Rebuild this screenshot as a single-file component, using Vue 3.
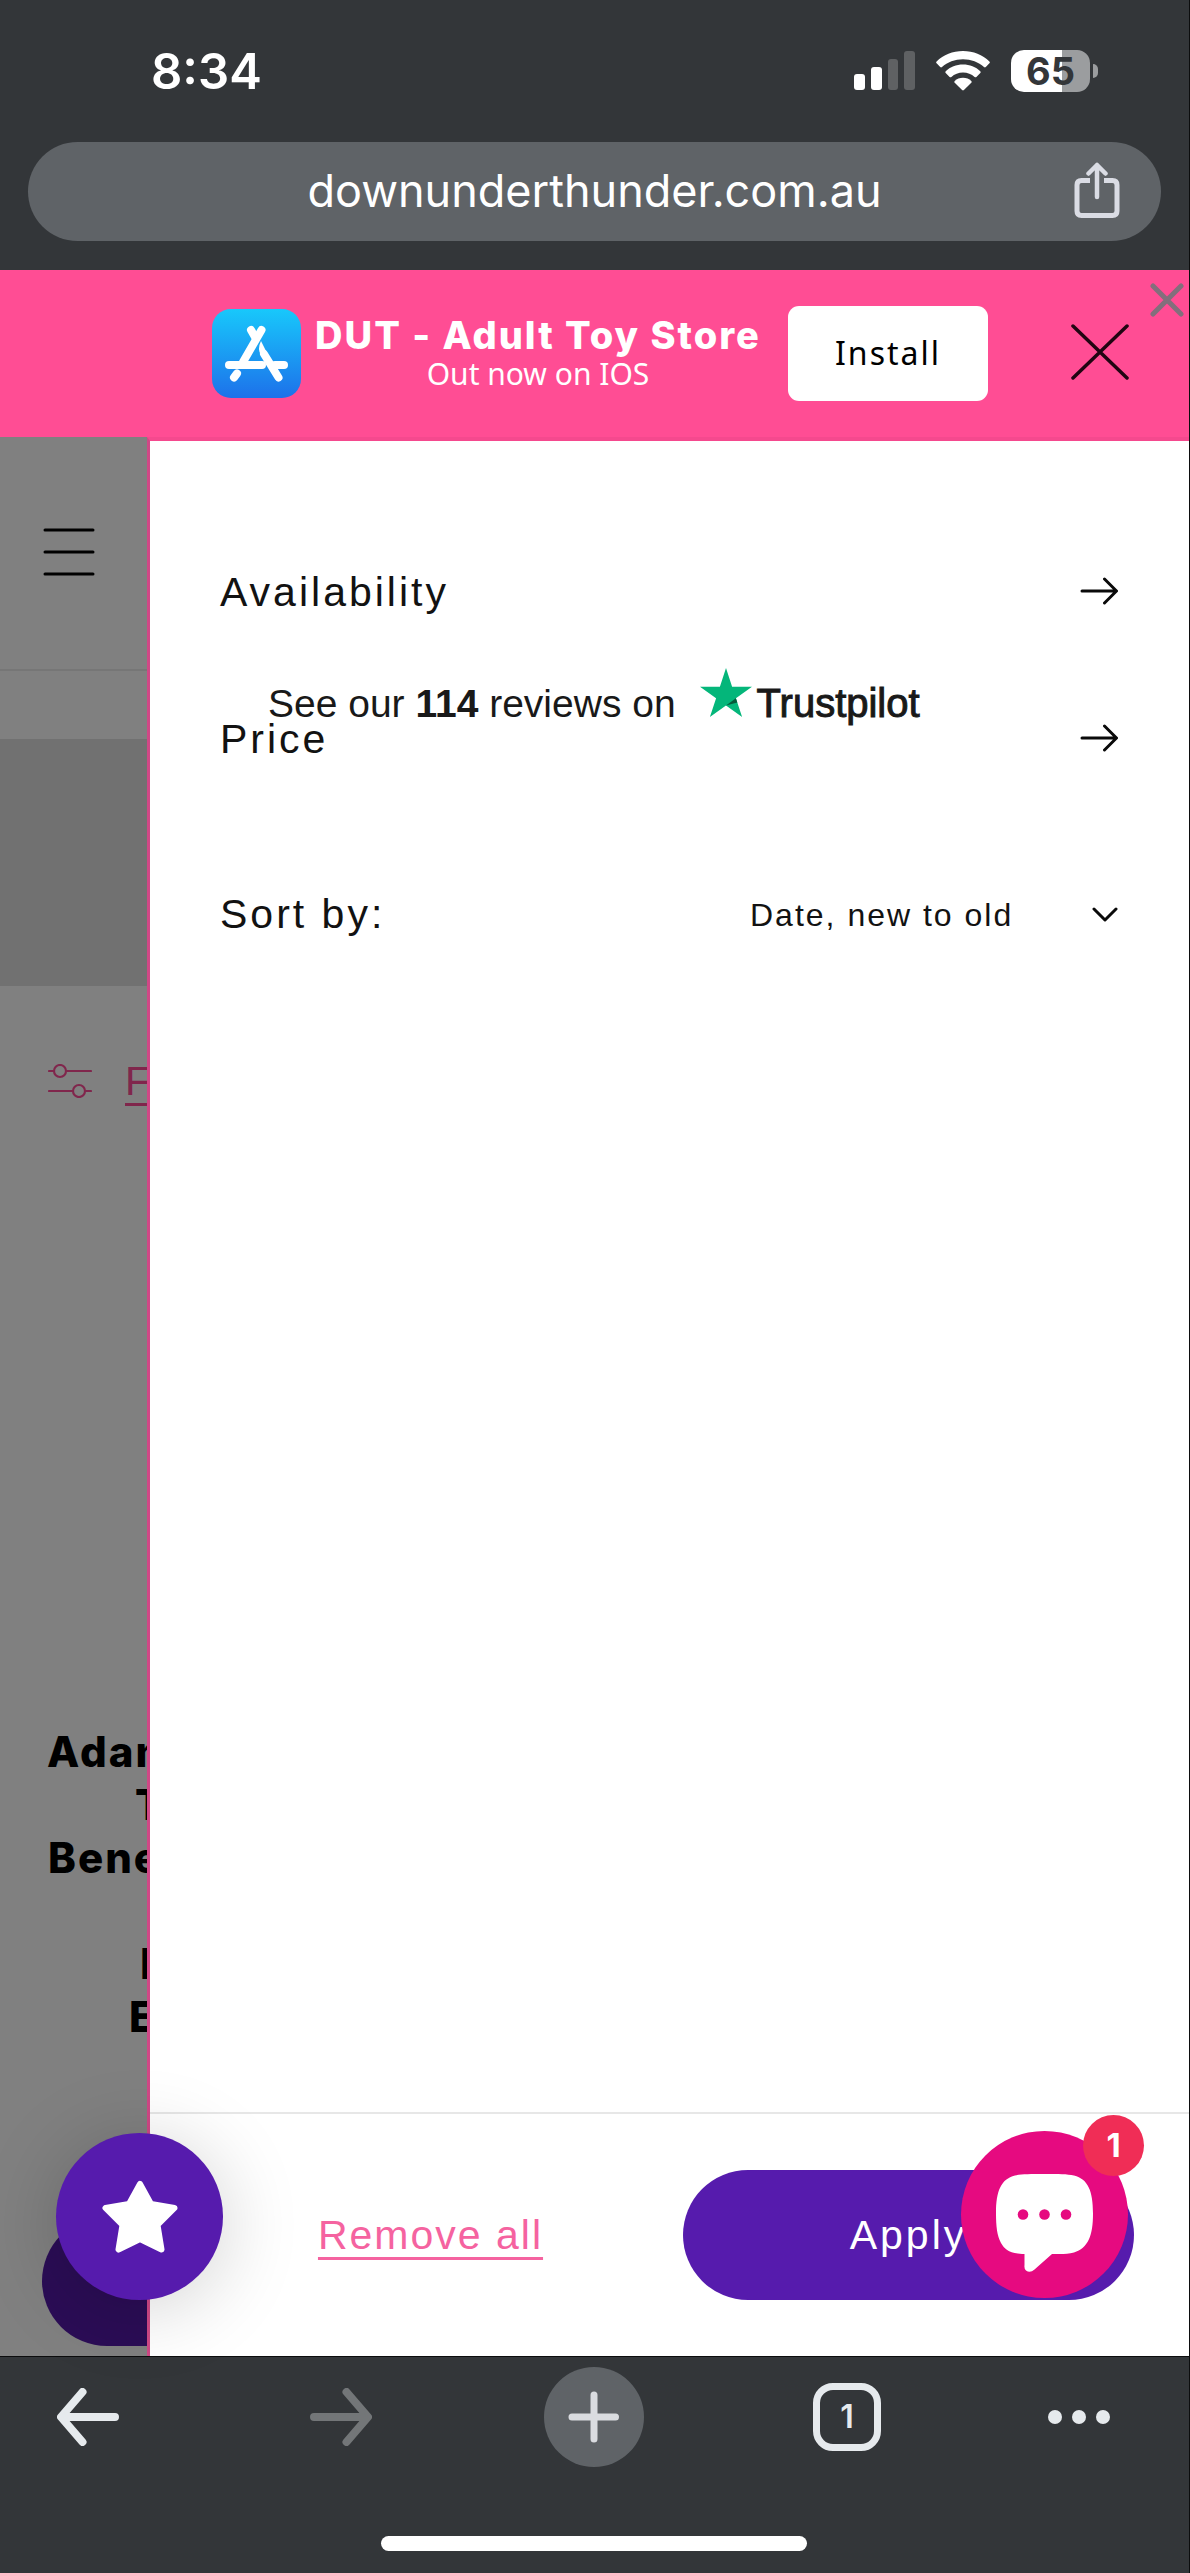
<script setup>
import { ref } from 'vue'

const sort = ref('newest')
const filters = ['Availability', 'Price']
const productTitle = [
  { text: 'Adam', indent: 47 },
  { text: 'T', indent: 135 },
  { text: 'Bene', indent: 48 },
  { text: '', indent: 0 },
  { text: 'I', indent: 140 },
  { text: 'E', indent: 129 }
]
</script>

<template>
  <div class="screen">
    <header class="browser-top">
      <div class="status">
        <span class="time">8:34</span>
        <div class="indicators">
          <svg width="61" height="40" viewBox="0 0 61 40" aria-hidden="true">
            <rect x="0" y="23" width="11" height="16" rx="3" fill="#fff" />
            <rect x="17" y="16" width="11" height="23" rx="3" fill="#fff" />
            <rect x="34" y="8" width="10" height="31" rx="3" fill="#5f6163" />
            <rect x="50" y="0" width="11" height="39" rx="3" fill="#5f6163" />
          </svg>
          <svg width="54" height="40" viewBox="0 0 54 40" fill="#fff" aria-hidden="true">
            <path d="M27 0C16.600 0 7.500 4 .6 10.400Q-.3 11.400 .6 12.300L4.200 16Q5.100 16.800 6 16C11.500 11 18.900 8.200 27 8.200S42.500 11 48 16Q48.900 16.800 49.800 16L53.400 12.300Q54.300 11.400 53.400 10.400C46.500 4 37.400 0 27 0Z" />
            <path d="M27 13.600C20.300 13.600 14.200 16.100 9.700 20.200Q8.800 21.100 9.700 22L13.600 25.900Q14.400 26.700 15.400 25.900C18.500 23.200 22.500 21.600 27 21.600S35.500 23.200 38.600 25.900Q39.600 26.700 40.400 25.900L44.300 22Q45.200 21.100 44.300 20.200C39.800 16.100 33.700 13.600 27 13.600Z" />
            <path d="M27 26.800C23.700 26.800 20.800 28 18.700 29.900Q17.800 30.800 18.700 31.700L26.100 39.100Q27 39.900 27.900 39.100L35.300 31.700Q36.200 30.800 35.300 29.900C33.200 28 30.300 26.800 27 26.800Z" />
          </svg>
          <div class="battery">
            <span class="cell">65</span>
            <span class="nub"></span>
          </div>
        </div>
      </div>
      <div class="address">
        <span class="url">downunderthunder.com.au</span>
        <button class="plain share" aria-label="Share">
          <svg width="46" height="56" viewBox="0 0 46 56" fill="none" stroke="#dadce4" stroke-width="5" stroke-linecap="round" stroke-linejoin="round">
            <path d="M16 18.500H7.500Q3 18.500 3 23V49Q3 53.500 7.500 53.500H38.500Q43 53.500 43 49V23Q43 18.500 38.500 18.500H30" stroke-linecap="butt" />
            <path d="M23 35V3M14.500 11.500L23 3L31.500 11.500" stroke-width="4.500" />
          </svg>
        </button>
      </div>
    </header>

    <aside class="banner">
      <svg class="app-icon" viewBox="0 0 89 89" aria-hidden="true">
        <defs>
          <linearGradient id="sky" x1="0" y1="0" x2="0" y2="1">
            <stop offset="0" stop-color="#18c8fb" />
            <stop offset="1" stop-color="#1d71ea" />
          </linearGradient>
        </defs>
        <rect width="89" height="89" rx="19" fill="url(#sky)" />
        <g stroke="#fff" stroke-width="8" stroke-linecap="round" fill="none">
          <path d="M49.500 21L31 53" />
          <path d="M39 21L43 28" />
          <path d="M17 56H50" />
          <path d="M63 56H72" />
          <path d="M25 64.500L22 68.500" />
          <path d="M52 45L66.500 68.500" />
        </g>
        <path d="M49 32Q45 40 49 46L55 56L58 50Z" fill="#fff" />
      </svg>
      <div class="pitch">
        <strong>DUT - Adult Toy Store</strong>
        <span>Out now on IOS</span>
      </div>
      <button class="install">Install</button>
      <button class="plain dismiss" aria-label="Dismiss banner">
        <svg width="58" height="56" viewBox="0 0 58 56" stroke="#210512" stroke-width="3.500" stroke-linecap="round">
          <path d="M2 2L56 54M56 2L2 54" />
        </svg>
      </button>
      <button class="plain corner-close" aria-label="Close">
        <svg width="34" height="34" viewBox="0 0 34 34" stroke="#826f7c" stroke-width="5" stroke-linecap="round">
          <path d="M3 3L31 31M31 3L3 31" />
        </svg>
      </button>
    </aside>

    <main class="content">
      <section class="page">
        <div class="page-header">
          <button class="plain" aria-label="Menu">
            <svg width="52" height="48" viewBox="0 0 52 48" stroke="#000" stroke-width="3" stroke-linecap="round">
              <path d="M2 2H50M2 24H50M2 46H50" />
            </svg>
          </button>
        </div>
        <div class="hero"></div>
        <div class="facets">
          <svg width="44" height="34" viewBox="0 0 44 34" fill="none" stroke="#80264c" stroke-width="2.200" stroke-linecap="round" aria-hidden="true">
            <circle cx="12" cy="7" r="6" />
            <circle cx="31" cy="27" r="6" />
            <path d="M1 7H6M18 7H43M1 27H25M37 27H43" />
          </svg>
          <a href="#filter">F</a>
        </div>
        <h2 class="product">
          <span v-for="(line, i) in productTitle" :key="i" :style="{ paddingLeft: line.indent + 'px' }">{{ line.text }}</span>
        </h2>
        <button class="plain page-button" aria-label="Product options"></button>
      </section>

      <section class="drawer">
        <div class="options">
          <button v-for="name in filters" :key="name" class="plain row">
            <span>{{ name }}</span>
            <svg class="arrow" width="38" height="28" viewBox="0 0 38 28" fill="none" stroke="#0a0a0a" stroke-width="3" stroke-linecap="round" stroke-linejoin="round" aria-hidden="true">
              <path d="M2 14H36M24.500 2L36.500 14L24.500 26" />
            </svg>
          </button>
          <div class="row sort">
            <label for="sort-by">Sort by:</label>
            <div class="select">
              <select id="sort-by" v-model="sort">
                <option value="newest">Date, new to old</option>
              </select>
              <svg width="26" height="15" viewBox="0 0 26 15" fill="none" stroke="#0a0a0a" stroke-width="3" stroke-linecap="round" stroke-linejoin="round" aria-hidden="true">
                <path d="M2 2L13 13L24 2" />
              </svg>
            </div>
          </div>
        </div>
        <a class="trustpilot" href="#reviews">
          <span>See our <b>114</b> reviews on</span>
          <svg width="52" height="49" viewBox="0 0 52 49" aria-hidden="true">
            <path fill="#04b67a" d="M26 0L32.100 18.700H52L35.900 30.200L42.100 49L26 37.400L9.900 49L16.100 30.200L0 18.700H19.900Z" />
            <path fill="#055a3a" d="M37.300 34.500L35.900 30.200L26 37.400Z" />
          </svg>
          <span class="brand">Trustpilot</span>
        </a>
        <footer class="actions">
          <a href="#clear">Remove all</a>
          <button class="apply">Apply</button>
        </footer>
      </section>

      <button class="plain bubble rewards" aria-label="Rewards">
        <svg width="76" height="74" viewBox="0 0 76 74" fill="#fff" stroke="#fff" stroke-width="6" stroke-linejoin="round">
          <path d="M38 4L49 24L72.500 28L55.500 45L59.500 69.500L38 59L16.500 69.500L20.500 45L3.500 28L27 24Z" />
        </svg>
      </button>
      <button class="plain bubble chat" aria-label="Open chat">
        <svg width="97" height="98" viewBox="0 0 97 98">
          <path fill="#fff" d="M48.500 0C63 0 71 0 78 1.500C92 5 97 17 97 39.500S92 74 78 78.500C71 80.500 64 80 56 80L38.500 95.500Q34 99.500 30 96.500Q28 95 28.500 91V80C14 79.500 9 76 5 69C1 61.500 0 52 0 39.500C0 17 5 5 19 1.500C26 0 34 0 48.500 0Z" />
          <g fill="#e60a80">
            <circle cx="27" cy="40.500" r="5.300" />
            <circle cx="48.500" cy="40.500" r="5.300" />
            <circle cx="70" cy="40.500" r="5.300" />
          </g>
        </svg>
        <span class="badge">1</span>
      </button>
    </main>

    <nav class="toolbar">
      <div class="tools">
        <button class="plain" aria-label="Back">
          <svg width="62" height="58" viewBox="0 0 62 58" fill="none" stroke="#e6eaed" stroke-width="8" stroke-linecap="round" stroke-linejoin="round">
            <path d="M58 29H5M25.500 4L4 29L25.500 54" />
          </svg>
        </button>
        <button class="plain" aria-label="Forward" disabled>
          <svg width="62" height="58" viewBox="0 0 62 58" fill="none" stroke="#737678" stroke-width="8" stroke-linecap="round" stroke-linejoin="round">
            <path d="M4 29H57M36.500 4L58 29L36.500 54" />
          </svg>
        </button>
        <button class="plain" aria-label="New tab">
          <svg width="100" height="100" viewBox="0 0 100 100" stroke="#dadce0" stroke-width="7" stroke-linecap="round">
            <circle cx="50" cy="50" r="50" fill="#5f6367" stroke="none" />
            <path d="M28 50H71.500M50 28V72" />
          </svg>
        </button>
        <button class="plain" aria-label="Open tabs"><span class="tabs">1</span></button>
        <button class="plain more" aria-label="More">
          <svg width="64" height="16" viewBox="0 0 64 16" fill="#e6eaed">
            <circle cx="8" cy="8" r="7" />
            <circle cx="32" cy="8" r="7" />
            <circle cx="56" cy="8" r="7" />
          </svg>
        </button>
      </div>
      <div class="home-bar"></div>
    </nav>
  </div>
</template>

<style>
body {
  margin: 0;
  background: #333639;
}
</style>

<style scoped>
.screen {
  display: flex;
  flex-direction: column;
  min-height: 100vh;
  box-sizing: border-box;
  border-right: 1px solid #0c0d0e;
  background: #333639;
  font-family: "Liberation Sans", Arial, sans-serif;
  color: #121212;
}

.screen * {
  box-sizing: border-box;
}

svg {
  display: block;
  flex: none;
}

button {
  font: inherit;
  letter-spacing: inherit;
  color: inherit;
  cursor: pointer;
}

.plain {
  padding: 0;
  border: 0;
  background: none;
}

.browser-top {
  padding-bottom: 29px;
  font-family: Inter, sans-serif;
  color: #fff;
}

.status {
  display: flex;
  align-items: center;
  justify-content: space-between;
  height: 142px;
  padding: 0 91px 0 151px;
}

.time {
  font-size: 49px;
  font-weight: 600;
}

.indicators {
  display: flex;
  align-items: center;
  gap: 21px;
}

.battery {
  display: flex;
  align-items: center;
  gap: 3px;
}

.cell {
  display: flex;
  align-items: center;
  justify-content: center;
  width: 79px;
  height: 42px;
  border-radius: 13px;
  background: linear-gradient(90deg, #fff 65%, #9b9d9f 65%);
  color: #333639;
  font-size: 38px;
  font-weight: 700;
}

.nub {
  width: 5px;
  height: 14px;
  border-radius: 0 7px 7px 0;
  background: #9b9d9f;
}

.address {
  display: flex;
  align-items: center;
  justify-content: center;
  position: relative;
  height: 99px;
  margin: 0 28px;
  padding-bottom: 3px;
  border-radius: 50px;
  background: #5f6367;
  font-size: 45px;
}

.share {
  position: absolute;
  right: 41px;
}

.banner {
  display: flex;
  align-items: center;
  position: relative;
  height: 167px;
  padding-left: 212px;
  background: #ff4d94;
  color: #fff;
}

.app-icon {
  width: 89px;
  height: 89px;
}

.pitch {
  display: flex;
  flex-direction: column;
  align-items: center;
  width: 444px;
  margin: 0 28px 4px 15px;
  white-space: nowrap;
}

.pitch strong {
  font: 800 38px/44px Inter, sans-serif;
  letter-spacing: 2px;
}

.pitch span {
  font: 30px/33px "Noto Sans", sans-serif;
}

.install {
  width: 200px;
  height: 95px;
  padding-bottom: 4px;
  border: 0;
  border-radius: 11px;
  background: #fff;
  color: #000;
  font-family: "Noto Sans", sans-serif;
  font-size: 32px;
  letter-spacing: 2px;
}

.dismiss {
  margin: 0 0 4px 83px;
}

.corner-close {
  position: absolute;
  top: 13px;
  right: 5px;
}

.content {
  display: flex;
  flex: 1;
  position: relative;
}

.page {
  display: flex;
  flex-direction: column;
  width: 147px;
  overflow: hidden;
  background: #808080;
}

.page-header {
  display: flex;
  align-items: center;
  height: 234px;
  padding: 0 0 2px 43px;
  border-bottom: 2px solid #767676;
}

.hero {
  height: 247px;
  margin-top: 68px;
  background: #717171;
}

.facets {
  display: flex;
  align-items: center;
  gap: 33px;
  height: 190px;
  padding-left: 48px;
}

.facets a {
  color: #80264c;
  font-size: 41px;
  letter-spacing: 3px;
  text-decoration-thickness: 3px;
  text-underline-offset: 8px;
}

.product {
  display: flex;
  flex-direction: column;
  margin: 549px 0 0;
  color: #000;
  font: 800 42px/53px Inter, sans-serif;
  letter-spacing: 2px;
  white-space: nowrap;
}

.product span {
  height: 53px;
}

.page-button {
  flex: none;
  width: 451px;
  height: 130px;
  margin: auto 0 10px 42px;
  border-radius: 65px;
  background: #2b0d56;
}

.drawer {
  display: flex;
  flex: 1;
  flex-direction: column;
  position: relative;
  border-top: 4px solid #f5498e;
  border-left: 3px solid #d04886;
  background: #fff;
}

.options {
  padding: 78px 70px 0;
}

.row {
  display: flex;
  align-items: center;
  justify-content: space-between;
  width: 100%;
  height: 147px;
  font-size: 41px;
  letter-spacing: 3px;
}

.arrow {
  margin: 0 1px 4px 0;
}

.sort {
  margin-top: 28px;
}

.select {
  display: flex;
  align-items: center;
  position: relative;
}

.select select {
  padding: 16px 105px 16px 0;
  border: 0;
  appearance: none;
  background: none;
  color: #121212;
  font: 32px "Liberation Sans", Arial, sans-serif;
  letter-spacing: 2px;
}

.select svg {
  position: absolute;
  right: 1px;
  pointer-events: none;
}

.trustpilot {
  display: flex;
  align-items: baseline;
  position: absolute;
  top: 227px;
  left: 118px;
  color: #191919;
  font-size: 39px;
  line-height: 50px;
  text-decoration: none;
  white-space: nowrap;
}

.trustpilot svg {
  margin: 0 5px -4px 24px;
}

.brand {
  font-size: 40px;
  -webkit-text-stroke: 1px #191919;
}

.actions {
  display: grid;
  grid-template-columns: 1fr 1fr;
  gap: 27px;
  align-items: center;
  justify-items: center;
  margin-top: auto;
  padding: 56px 55px;
  border-top: 2px solid #e7e7e7;
  font-size: 41px;
  letter-spacing: 2px;
}

.actions a {
  color: #f563a0;
  text-decoration-thickness: 3px;
  text-underline-offset: 8px;
}

.apply {
  width: 100%;
  height: 130px;
  border: 0;
  border-radius: 65px;
  background: #561bad;
  color: #fff;
  letter-spacing: 3px;
}

.bubble {
  display: flex;
  align-items: center;
  justify-content: center;
  position: absolute;
  width: 167px;
  height: 167px;
  border-radius: 50%;
}

.rewards {
  bottom: 56px;
  left: 56px;
  background: #561bad;
  box-shadow: 0 8px 80px rgba(0, 0, 0, 0.18);
}

.chat {
  right: 61px;
  bottom: 58px;
  background: #e60a80;
}

.chat svg {
  margin-top: 16px;
}

.badge {
  position: absolute;
  top: -16px;
  right: -16px;
  width: 61px;
  height: 61px;
  border-radius: 50%;
  background: #f02d56;
  color: #fff;
  font: 700 33px/61px Inter, sans-serif;
  text-align: center;
}

.toolbar {
  display: flex;
  flex-direction: column;
  justify-content: space-between;
  height: 217px;
  padding: 10px 26px 22px 25px;
  border-top: 1px solid #0c0d0e;
}

.tools {
  display: flex;
  justify-content: space-between;
}

.tools button {
  display: flex;
  align-items: center;
  justify-content: center;
  width: 126px;
  height: 100px;
}

.tools .more {
  padding-right: 42px;
}

.tabs {
  width: 68px;
  height: 68px;
  border: 7px solid #e6eaed;
  border-radius: 20px;
  color: #e6eaed;
  font: 600 32px/54px Inter, sans-serif;
}

.home-bar {
  width: 426px;
  height: 15px;
  margin: 0 auto;
  border-radius: 8px;
  background: #fff;
}
</style>
